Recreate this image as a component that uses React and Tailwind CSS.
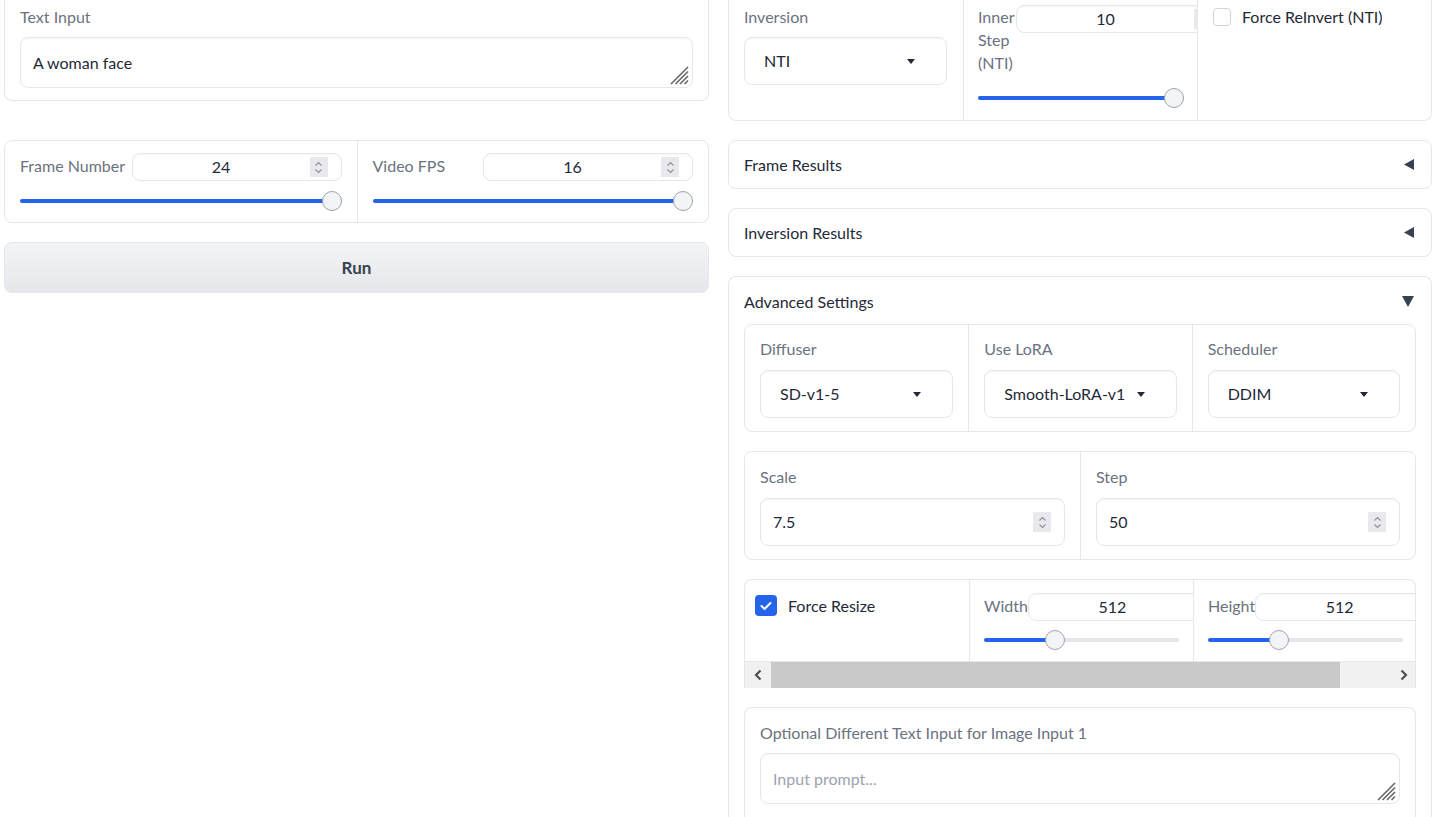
import React from 'react'

function Label({ children, className = '' }) {
  return <span className={`text-[16px] leading-[23px] text-[#6b7280] ${className}`}>{children}</span>
}

function Spinner() {
  return (
    <span className="flex h-[20px] w-[18px] shrink-0 items-center justify-center bg-[#e9e9ed]">
      <svg width="9" height="15" viewBox="0 0 9 15" fill="none" stroke="#8a8f98" strokeWidth="1.1">
        <path d="M1.5 5.5 L4.5 2.5 L7.5 5.5" />
        <path d="M1.5 9.5 L4.5 12.5 L7.5 9.5" />
      </svg>
    </span>
  )
}

function Caret() {
  return (
    <svg width="8" height="5" viewBox="0 0 8 5">
      <path d="M0 0 H8 L4 5 Z" fill="#1f2937" />
    </svg>
  )
}

function Slider({ pct }) {
  return (
    <div className="relative flex h-[20px] items-center">
      <div className="h-[4px] w-full rounded-full bg-[#e5e7eb]" />
      <div className="absolute left-0 h-[4px] rounded-full bg-[#2563eb]" style={{ width: `calc((100% - 20px) * ${pct / 100} + 10px)` }} />
      <div
        className="absolute top-0 h-[20px] w-[20px] rounded-full border border-[#9ca3af] bg-[#f3f4f6]"
        style={{ left: `calc((100% - 20px) * ${pct / 100})` }}
      />
    </div>
  )
}

function NumBox({ value, className = '' }) {
  return (
    <div className={`flex h-[28px] items-center rounded-lg border border-[#e5e7eb] bg-white pr-[13px] shadow-[inset_0_1px_2px_rgba(0,0,0,0.04)] ${className}`}>
      <span className="flex-1 text-center text-[16px] text-[#1f2937]">{value}</span>
      <Spinner />
    </div>
  )
}

function Dropdown({ value }) {
  return (
    <div className="flex h-[48px] items-center justify-between rounded-lg border border-[#e5e7eb] bg-white pl-[19px] pr-[31px] shadow-[inset_0_1px_2px_rgba(0,0,0,0.04)]">
      <span className="text-[16px] text-[#1f2937]">{value}</span>
      <Caret />
    </div>
  )
}

function ResizeHandle() {
  return (
    <svg width="20" height="20" viewBox="0 0 20 20" className="absolute bottom-[2px] right-[3px]" stroke="#666" strokeWidth="1.6">
      <path d="M2 19 L19 2" />
      <path d="M6.5 19 L19 6.5" />
      <path d="M11 19 L19 11" />
      <path d="M15.5 19 L19 15.5" />
    </svg>
  )
}

function Textarea({ value, placeholder }) {
  return (
    <div className="relative flex h-[51px] items-center rounded-lg border border-[#e5e7eb] bg-white px-[12px] shadow-[inset_0_1px_2px_rgba(0,0,0,0.04)]">
      {value ? (
        <span className="text-[16px] text-[#1f2937]">{value}</span>
      ) : (
        <span className="text-[16px] text-[#9ca3af]">{placeholder}</span>
      )}
      <ResizeHandle />
    </div>
  )
}

function Accordion({ title, open }) {
  return (
    <div className="flex h-[49px] items-center justify-between rounded-lg border border-[#e5e7eb] bg-white pl-[15px] pr-[17px]">
      <span className="text-[16px] text-[#1f2937]">{title}</span>
      {open ? (
        <svg width="12" height="11" viewBox="0 0 12 11"><path d="M0 0 H12 L6 11 Z" fill="#374151" /></svg>
      ) : (
        <svg width="10" height="11" viewBox="0 0 10 11"><path d="M10 0 V11 L0 5.5 Z" fill="#374151" /></svg>
      )}
    </div>
  )
}

export default function App() {
  return (
    <div className="flex h-[817px] w-full gap-[19px] overflow-hidden bg-white pl-[4px] font-[Lato,sans-serif]">
      {/* left column */}
      <div className="flex w-[705px] shrink-0 flex-col">
        <div className="flex h-[101px] flex-col rounded-b-lg border border-t-0 border-[#e5e7eb] px-[15px] pt-[5px]">
          <Label>Text Input</Label>
          <div className="mt-[9px]">
            <Textarea value="A woman face" />
          </div>
        </div>

        <div className="mt-[39px] grid h-[83px] grid-cols-2 rounded-lg border border-[#e5e7eb]">
          <div className="flex flex-col px-[15px] pt-[12px]">
            <div className="flex items-start justify-between">
              <Label className="pt-[1px]">Frame Number</Label>
              <NumBox value="24" className="w-[210px]" />
            </div>
            <div className="mt-[10px]">
              <Slider pct={100} />
            </div>
          </div>
          <div className="flex flex-col border-l border-[#e5e7eb] px-[15px] pt-[12px]">
            <div className="flex items-start justify-between">
              <Label className="pt-[1px]">Video FPS</Label>
              <NumBox value="16" className="w-[210px]" />
            </div>
            <div className="mt-[10px]">
              <Slider pct={100} />
            </div>
          </div>
        </div>

        <button className="mt-[19px] flex h-[51px] items-center justify-center rounded-lg border border-[#e5e7eb] bg-gradient-to-b from-[#f3f4f6] to-[#e5e7eb] text-[17px] font-bold text-[#374151]">
          Run
        </button>
      </div>

      {/* right column */}
      <div className="flex w-[704px] shrink-0 flex-col">
        <div className="grid h-[121px] grid-cols-3 rounded-b-lg border border-t-0 border-[#e5e7eb]">
          <div className="flex flex-col px-[15px] pt-[5px]">
            <Label>Inversion</Label>
            <div className="mt-[9px] w-[203px]">
              <Dropdown value="NTI" />
            </div>
          </div>
          <div className="flex flex-col overflow-hidden border-l border-[#e5e7eb] pl-[14px] pt-[5px]">
            <div className="flex items-start">
              <Label className="w-[38px] shrink-0">Inner Step (NTI)</Label>
              <NumBox value="10" className="w-[210px] shrink-0" />
            </div>
            <div className="mt-[14px] w-[206px]">
              <Slider pct={100} />
            </div>
          </div>
          <div className="flex items-start gap-[11px] border-l border-[#e5e7eb] pl-[15px] pt-[8px]">
            <span className="h-[18px] w-[18px] rounded-[4px] border border-[#d1d5db] bg-white" />
            <span className="text-[16px] leading-[18px] text-[#1f2937]">Force ReInvert (NTI)</span>
          </div>
        </div>

        <div className="mt-[19px]">
          <Accordion title="Frame Results" />
        </div>
        <div className="mt-[19px]">
          <Accordion title="Inversion Results" />
        </div>

        <div className="mt-[19px] flex flex-1 flex-col rounded-t-lg border border-b-0 border-[#e5e7eb] px-[15px]">
          <div className="flex h-[47px] items-center justify-between pr-[2px] pt-[2px]">
            <span className="text-[16px] text-[#1f2937]">Advanced Settings</span>
            <svg width="12" height="11" viewBox="0 0 12 11"><path d="M0 0 H12 L6 11 Z" fill="#374151" /></svg>
          </div>

          <div className="grid h-[108px] grid-cols-3 rounded-lg border border-[#e5e7eb]">
            <div className="flex flex-col px-[15px] pt-[12px]">
              <Label>Diffuser</Label>
              <div className="mt-[10px]"><Dropdown value="SD-v1-5" /></div>
            </div>
            <div className="flex flex-col border-l border-[#e5e7eb] px-[15px] pt-[12px]">
              <Label>Use LoRA</Label>
              <div className="mt-[10px]"><Dropdown value="Smooth-LoRA-v1" /></div>
            </div>
            <div className="flex flex-col border-l border-[#e5e7eb] px-[15px] pt-[12px]">
              <Label>Scheduler</Label>
              <div className="mt-[10px]"><Dropdown value="DDIM" /></div>
            </div>
          </div>

          <div className="mt-[19px] grid h-[109px] grid-cols-2 rounded-lg border border-[#e5e7eb]">
            {[['Scale', '7.5'], ['Step', '50']].map(([l, v], i) => (
              <div key={l} className={`flex flex-col px-[15px] pt-[13px] ${i ? 'border-l border-[#e5e7eb]' : ''}`}>
                <Label>{l}</Label>
                <div className="mt-[10px] flex h-[48px] items-center justify-between rounded-lg border border-[#e5e7eb] bg-white pl-[12px] pr-[13px] shadow-[inset_0_1px_2px_rgba(0,0,0,0.04)]">
                  <span className="text-[16px] text-[#1f2937]">{v}</span>
                  <Spinner />
                </div>
              </div>
            ))}
          </div>

          <div className="mt-[19px] flex h-[109px] flex-col overflow-hidden rounded-t-lg border border-b-0 border-[#e5e7eb]">
            <div className="flex h-[81px] overflow-hidden">
              <div className="flex w-[224px] shrink-0 items-start gap-[11px] pl-[10px] pt-[15px]">
                <span className="flex h-[21px] w-[22px] items-center justify-center rounded-[4px] bg-[#2563eb]">
                  <svg width="12" height="10" viewBox="0 0 12 10" fill="none" stroke="white" strokeWidth="2" strokeLinecap="round" strokeLinejoin="round">
                    <path d="M1.5 5 L4.5 8 L10.5 2" />
                  </svg>
                </span>
                <span className="text-[16px] leading-[21px] text-[#1f2937]">Force Resize</span>
              </div>
              {['Width', 'Height'].map((l) => (
                <div key={l} className="flex w-[224px] shrink-0 flex-col overflow-hidden border-l border-[#e5e7eb] pl-[14px] pt-[13px]">
                  <div className="flex items-start">
                    <Label className="shrink-0 pt-[1px]">{l}</Label>
                    <NumBox value="512" className="w-[200px] shrink-0" />
                  </div>
                  <div className="mt-[9px] w-[195px]">
                    <Slider pct={35} />
                  </div>
                </div>
              ))}
            </div>
            <div className="flex h-[27px] items-center border-t border-[#e5e7eb] bg-[#f1f1f1]">
              <span className="flex w-[26px] justify-center">
                <svg width="8" height="12" viewBox="0 0 8 12" fill="none" stroke="#505050" strokeWidth="2.2"><path d="M6.5 1.5 L2 6 L6.5 10.5" /></svg>
              </span>
              <span className="h-full w-[569px] bg-[#c9c9c9]" />
              <span className="flex flex-1 justify-end pr-[7px]">
                <svg width="8" height="12" viewBox="0 0 8 12" fill="none" stroke="#505050" strokeWidth="2.2"><path d="M1.5 1.5 L6 6 L1.5 10.5" /></svg>
              </span>
            </div>
          </div>

          <div className="mt-[19px] flex flex-1 flex-col rounded-t-lg border border-b-0 border-[#e5e7eb] px-[15px] pt-[13px]">
            <Label>Optional Different Text Input for Image Input 1</Label>
            <div className="mt-[9px]">
              <Textarea placeholder="Input prompt..." />
            </div>
          </div>
        </div>
      </div>
    </div>
  )
}
